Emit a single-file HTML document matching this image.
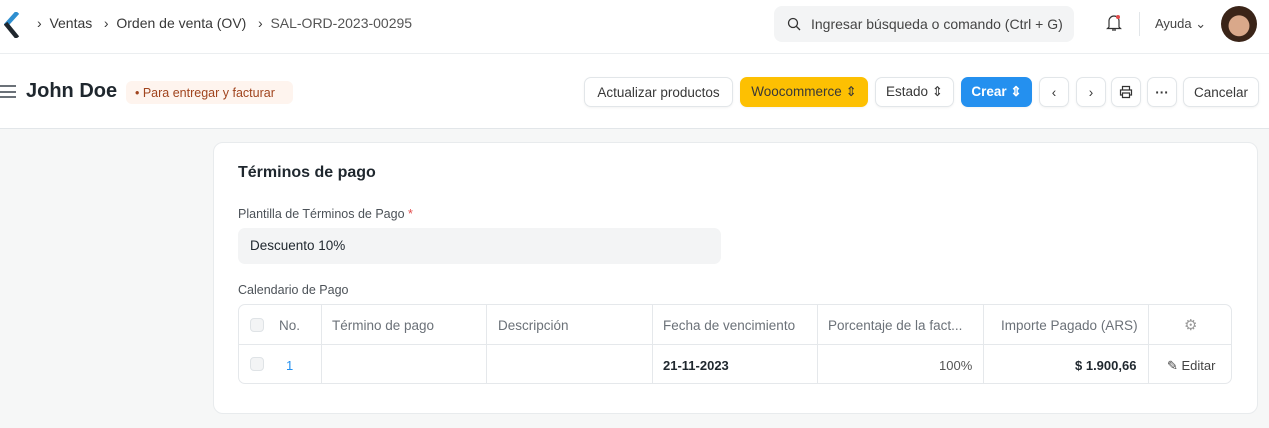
<!DOCTYPE html>
<html><head><meta charset="utf-8"><style>
*{box-sizing:border-box;margin:0;padding:0}
body{width:1269px;height:428px;background:#f6f7f7;font-family:"Liberation Sans",sans-serif;position:relative;overflow:hidden;color:#1f272e}
.a{position:absolute}
.top{left:0;top:0;width:1269px;height:54px;background:#fff;border-bottom:1px solid #ebeef0}
.band{left:0;top:54px;width:1269px;height:75px;background:#fff;border-bottom:1px solid #e2e6e9}
.bc{font-size:14px;color:#383838;top:15px}
.btn{position:absolute;top:77px;height:30px;border:1px solid #e2e6e9;border-radius:7px;background:#fff;font-size:13.5px;color:#383838;display:flex;align-items:center;justify-content:center;box-shadow:0 1px 2px rgba(0,0,0,.05)}
.card{left:213px;top:142px;width:1045px;height:272px;background:#fff;border:1px solid #e8ebed;border-radius:10px}
.lbl{font-size:12.5px;color:#4c5258}
.tbl{left:238px;top:304px;width:994px;height:80px;border:1px solid #e5e8eb;border-radius:7px}
.vl{position:absolute;top:0;width:1px;height:78px;background:#e5e8eb}
.th{position:absolute;top:13px;font-size:13.5px;color:#6b7178}
.td{position:absolute;top:53px;font-size:13px}
.cb{position:absolute;left:11px;width:14px;height:14px;border:1px solid #dfe3e6;border-radius:4px;background:#f3f4f5}
</style></head><body>
<div class="a top"></div>
<svg class="a" style="left:4px;top:12px" width="16" height="26" viewBox="0 0 16 26"><path d="M12 2 L3 12" stroke="#2f8fd0" stroke-width="4.5" stroke-linecap="square" fill="none"/><path d="M3 13 L12 24" stroke="#1f272e" stroke-width="4.5" stroke-linecap="square" fill="none"/></svg>
<div class="a bc" style="left:37px">›&nbsp;&nbsp;Ventas&nbsp;&nbsp;&nbsp;›&nbsp;&nbsp;Orden de venta (OV)&nbsp;&nbsp;&nbsp;›&nbsp;&nbsp;<span style="color:#555">SAL-ORD-2023-00295</span></div>
<div class="a" style="left:774px;top:6px;width:300px;height:36px;background:#f3f4f5;border-radius:8px"></div>
<svg class="a" style="left:787px;top:17px" width="14" height="14" viewBox="0 0 14 14"><circle cx="6" cy="6" r="4.5" stroke="#333" stroke-width="1.3" fill="none"/><path d="M9.5 9.5 L13 13" stroke="#333" stroke-width="1.3"/></svg>
<div class="a" style="left:811px;top:16px;font-size:14px;color:#444">Ingresar búsqueda o comando (Ctrl + G)</div>
<svg class="a" style="left:1105px;top:13px" width="18" height="20" viewBox="0 0 18 20"><path d="M4 14 V8 a5 5 0 0 1 10 0 V14 L15.5 15.5 H2.5 Z M7 17 h4" stroke="#333" stroke-width="1.2" fill="none"/><circle cx="13" cy="4" r="2" fill="#e24c4c"/></svg>
<div class="a" style="left:1139px;top:12px;width:1px;height:24px;background:#e2e6e9"></div>
<div class="a" style="left:1155px;top:16px;font-size:13px;color:#444">Ayuda ⌄</div>
<div class="a" style="left:1221px;top:6px;width:36px;height:36px;border-radius:50%;background:radial-gradient(circle at 50% 55%,#d9a88a 0 38%,#3a2418 40%)"></div>
<div class="a band"></div>
<div class="a" style="left:0;top:85px;width:16px;height:13px;border-top:2px solid #6b7178;border-bottom:2px solid #6b7178"><div style="margin-top:3.5px;height:2px;background:#6b7178"></div></div>
<div class="a" style="left:26px;top:80px;font-size:20px;font-weight:bold;color:#1f272e">John Doe</div>
<div class="a" style="left:126px;top:81px;width:167px;height:23px;background:#fef4ee;border-radius:6px;font-size:12.5px;color:#a0441e;padding:5px 0 0 9px">• Para entregar y facturar</div>
<div class="btn" style="left:584px;width:149px">Actualizar productos</div>
<div class="btn" style="left:740px;width:128px;background:#fdc002;border-color:#fdc002">Woocommerce ⇕</div>
<div class="btn" style="left:875px;width:79px">Estado ⇕</div>
<div class="btn" style="left:961px;width:71px;background:#2490ef;border-color:#2490ef;color:#fff;font-weight:bold">Crear ⇕</div>
<div class="btn" style="left:1039px;width:30px">‹</div>
<div class="btn" style="left:1076px;width:30px">›</div>
<div class="btn" style="left:1111px;width:30px"><svg width="14" height="14" viewBox="0 0 14 14"><path d="M3.5 5V1.5h7V5M3.5 10H1.5V5h11v5h-2M3.5 8h7v4.5h-7z" stroke="#333" stroke-width="1.2" fill="none"/></svg></div>
<div class="btn" style="left:1147px;width:30px;font-weight:bold">···</div>
<div class="btn" style="left:1183px;width:76px">Cancelar</div>
<div class="a card"></div>
<div class="a" style="left:238px;top:164px;font-size:16px;font-weight:bold">Términos de pago</div>
<div class="a lbl" style="left:238px;top:207px">Plantilla de Términos de Pago <span style="color:#e24c4c">*</span></div>
<div class="a" style="left:238px;top:228px;width:483px;height:36px;background:#f3f4f5;border-radius:7px;font-size:13.5px;padding:10px 12px">Descuento 10%</div>
<div class="a lbl" style="left:238px;top:283px">Calendario de Pago</div>
<div class="a tbl">
<div style="position:absolute;left:0;top:39px;width:992px;height:1px;background:#e5e8eb"></div>
<div class="vl" style="left:82px"></div><div class="vl" style="left:247px"></div><div class="vl" style="left:413px"></div><div class="vl" style="left:578px"></div><div class="vl" style="left:744px"></div><div class="vl" style="left:909px"></div>
<div class="cb" style="top:13px"></div><div class="cb" style="top:52px"></div>
<div class="th" style="left:40px">No.</div>
<div class="th" style="left:93px">Término de pago</div>
<div class="th" style="left:259px">Descripción</div>
<div class="th" style="left:424px">Fecha de vencimiento</div>
<div class="th" style="left:589px">Porcentaje de la fact...</div>
<div class="th" style="left:762px">Importe Pagado (ARS)</div>
<div class="th" style="left:945px;top:11px;font-size:15px;color:#999">⚙</div>
<div class="td" style="left:47px;color:#2490ef">1</div>
<div class="td" style="left:424px;font-weight:bold">21-11-2023</div>
<div class="td" style="left:700px;color:#555">100%</div>
<div class="td" style="left:836px;font-weight:bold">$ 1.900,66</div>
<div class="td" style="left:928px;color:#444">✎ Editar</div>
</div>
</body></html>
